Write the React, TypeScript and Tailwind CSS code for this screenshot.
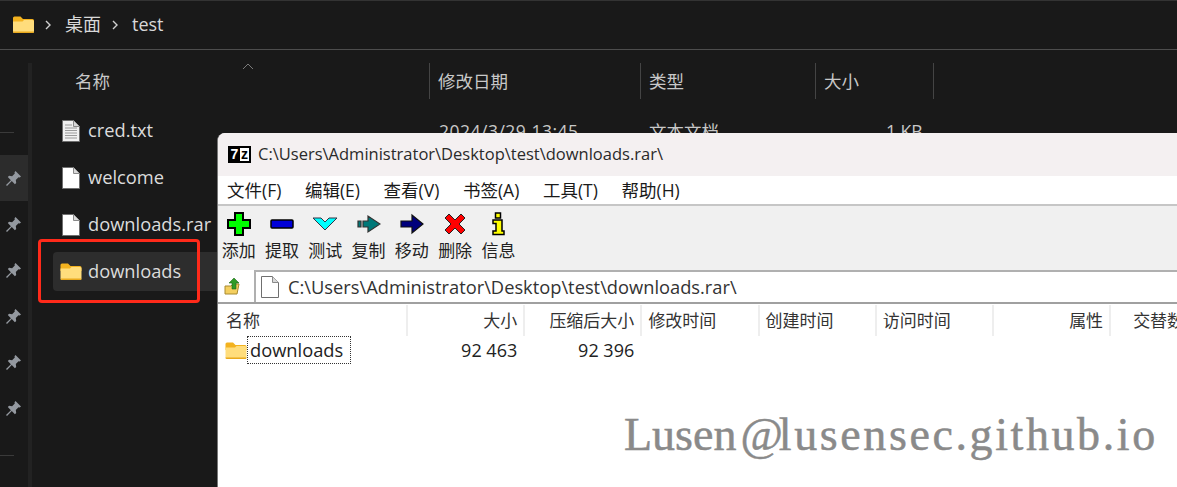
const CJK = "font-['Open_Sans','Noto_Sans_CJK_SC',sans-serif]";

function Folder({ w = 21, h = 17 }: { w?: number; h?: number }) {
  return (
    <svg width={w} height={h} viewBox="0 0 21 17" className="shrink-0">
      <path d="M0 2a1.500 1.500 0 0 1 1.500-1.500h6L10 3h9.500A1.500 1.500 0 0 1 21 4.500V8H0z" fill="#f3b21f" />
      <path d="M0 5.500h9.500L11 4h8.500A1.500 1.500 0 0 1 21 5.500v10a1.500 1.500 0 0 1-1.500 1.500h-18A1.500 1.500 0 0 1 0 15.500z" fill="#ffdd7c" />
      <path d="M0 15.500h21a1.500 1.500 0 0 1-1.500 1.500h-18A1.500 1.500 0 0 1 0 15.500z" fill="#e9a91d" />
    </svg>
  );
}

function Doc({ lines = false }: { lines?: boolean }) {
  return (
    <svg width="18" height="22" viewBox="0 0 18 22" className="shrink-0">
      <path d="M.5.500h11l6 6v15H.500z" fill={lines ? "#f1f1f1" : "#ffffff"} stroke="#6f6f6f" />
      <path d="M11.500.500v6h6" fill="#d9d9d9" stroke="#8a8a8a" />
      {lines && (
        <path d="M3 5h7M3 8h12M3 10.500h12M3 13h12M3 15.500h12M3 18h12" stroke="#9a9a9a" strokeWidth="1" />
      )}
    </svg>
  );
}

function Pin() {
  return (
    <svg width="17" height="17" viewBox="0 0 17 17">
      <path d="M10.500 1L16 6.500l-1.300 1-1.200-.3-2.700 2.700.4 3-1.300 1.300-3.100-3.100L2 16l-1-1 4.900-4.800L2.800 7.100 4.100 5.800l3 .4 2.700-2.700-.3-1.200z" fill="#9499a0" />
    </svg>
  );
}

function Chevron() {
  return (
    <svg width="8" height="12" viewBox="0 0 8 12" className="shrink-0">
      <path d="M2 2l4 4-4 4" fill="none" stroke="#d0d0d0" strokeWidth="1.400" />
    </svg>
  );
}

function FileRow({ icon, name, selected }: { icon: React.ReactNode; name: string; selected?: boolean }) {
  return (
    <div className={`flex h-[39px] items-center mb-2 ${selected ? "bg-[#2d2d2d] rounded-sm" : ""}`}>
      <div className="w-[35px] flex justify-center pr-[1px] pl-[1px]">{icon}</div>
      <span className="text-[18.300px] text-[#dcdcdc] -mt-[2px]">{name}</span>
    </div>
  );
}

const tools: [string, React.ReactNode][] = [
  ["添加", <path d="M8 1h8v7h7v8h-7v7H8v-7H1V8h7z" fill="#00ff00" stroke="#000" strokeWidth="2" />],
  ["提取", <path d="M2 8h20a1 1 0 0 1 1 1v6a1 1 0 0 1-1 1H2a1 1 0 0 1-1-1V9a1 1 0 0 1 1-1z" fill="#0000d8" stroke="#000" strokeWidth="1.500" />],
  ["测试", <path d="M0 6h8l4 4 4-4h8L12 18z" fill="#00ffff" stroke="#334" strokeWidth="1" />],
  ["复制", <path d="M1 9h3v6H1zM6 9h5V4l12 8-12 8v-5H6z" fill="#007878" stroke="#333" strokeWidth="1.200" />],
  ["移动", <path d="M1 9h11V3l11 9-11 9v-6H1z" fill="#00007c" stroke="#111" strokeWidth="1.200" />],
  ["删除", <path d="M6 2l6 6 6-6 4 4-6 6 6 6-4 4-6-6-6 6-4-4 6-6-6-6z" fill="#ff0000" stroke="#222" strokeWidth="1" />],
  ["信息", <path d="M9.500 1h5v5h-5zM7 8h9v11h2v3.500H7V19h3v-7.500H7z" fill="#ffff00" stroke="#000" strokeWidth="1.500" />],
];

const menus = ["文件(F)", "编辑(E)", "查看(V)", "书签(A)", "工具(T)", "帮助(H)"];

const headers: [string, string][] = [
  ["大小", "justify-end"],
  ["压缩后大小", "justify-end"],
  ["修改时间", "justify-start"],
  ["创建时间", "justify-start"],
  ["访问时间", "justify-start"],
  ["属性", "justify-end"],
];

export default function App() {
  return (
    <div className={`relative w-[1177px] h-[487px] overflow-hidden bg-[#191919] ${CJK}`}>
      {/* address bar */}
      <div className="h-[50px] flex items-center pl-[13px] border-y border-t-[#333] border-b-[#4d4d4d] text-[#d8d8d8] text-[18px]">
        <div className="-mt-[2px] flex"><Folder /></div>
        <div className="ml-[10px]"><Chevron /></div>
        <span className="ml-[13px] -mt-[1px]">桌面</span>
        <div className="ml-[10px]"><Chevron /></div>
        <span className="ml-[13px] -mt-[1px]">test</span>
      </div>

      <div className="flex h-[437px]">
        {/* navigation */}
        <div className="w-[28px] pt-[105px] flex flex-col items-stretch">
          <div className="h-px w-[14px] -mt-[23px] mb-[22px] bg-[#3a3a3a]" />
          {[0, 1, 2, 3, 4, 5].map((i) => (
            <div key={i} className={`h-[46.100px] flex items-center justify-center pr-[2px] ${i === 0 ? "bg-[#2c2c2c]" : ""}`}>
              <Pin />
            </div>
          ))}
          <div className="h-px w-[14px] mt-[23px] bg-[#3a3a3a]" />
        </div>
        <div className="w-[4px] bg-[#222] mt-[13px]" />

        {/* files */}
        <div className="flex-1 pl-[21px]">
          <div className="relative h-[61px] pt-[13px] text-[17.500px] text-[#c8c8c8]">
            <div className="flex h-[36px] items-center">
              <div className="w-[376px] pl-[22px]">名称</div>
              {[["修改日期", 211], ["类型", 175], ["大小", 118]].map(([t, w]) => (
                <div key={t as string} className="h-full flex items-center pl-[8px] border-l border-[#444]" style={{ width: w as number }}>
                  {t}
                </div>
              ))}
              <div className="h-full border-l border-[#444]" />
            </div>
            <svg width="12" height="7" viewBox="0 0 12 7" className="absolute left-[189px] top-[13px]">
              <path d="M1 6l5-5 5 5" fill="none" stroke="#7a7a7a" />
            </svg>
          </div>
          <div className="relative">
            <FileRow icon={<Doc lines />} name="cred.txt" />
            <FileRow icon={<Doc />} name="welcome" />
            <FileRow icon={<Doc />} name="downloads.rar" />
            <FileRow icon={<Folder w={22} h={17} />} name="downloads" selected />
            <div className="absolute top-[7px] left-[386px] text-[17.500px] tracking-[0.500px] text-[#c8c8c8]">2024/3/29 13:45</div>
            <div className="absolute top-[7px] left-[596px] text-[17.500px] text-[#c8c8c8]">文本文档</div>
            <div className="absolute top-[7px] left-[833px] text-[17.500px] text-[#c8c8c8]">1 KB</div>
          </div>
        </div>
      </div>

      {/* red annotation */}
      <div className="absolute left-[38px] top-[239px] w-[162px] h-[64px] border-[3px] border-[#ff2a1a] rounded-[4px]" />

      {/* 7-Zip window */}
      <div className="absolute left-[217px] top-[133px] w-[960px] h-[354px] bg-white rounded-tl-[8px] overflow-hidden border-l border-[#777] text-[#1a1a1a]">
        <div className="h-[43px] flex items-center bg-[#f4f0f1] pl-[10px] text-[16.500px] text-[#2a2a2a]">
          <div className="w-[23px] h-[17px] bg-black flex items-stretch p-[2px] gap-px font-['Liberation_Sans',sans-serif] text-[14px] leading-[13px] font-bold">
            <span className="flex-1 bg-black text-white text-center">7</span>
            <span className="flex-1 bg-white text-black text-center">z</span>
          </div>
          <span className="ml-[7px]">C:\Users\Administrator\Desktop\test\downloads.rar\</span>
        </div>
        <div className="h-[28px] flex items-center pl-[9px] gap-[23.600px] text-[17.500px] bg-white border-b-[2px] border-[#c6c6c6] box-content">
          {menus.map((m) => <span key={m}>{m}</span>)}
        </div>
        <div className="h-[64px] bg-[#f0f0f0] flex -ml-[1px]">
          {tools.map(([label, icon]) => (
            <div key={label} className="w-[43.300px] flex flex-col items-center pt-[6px]">
              <svg width="24" height="24" viewBox="0 0 24 24">{icon}</svg>
              <span className="text-[17px] leading-[22px] mt-[4px] text-[#222] whitespace-nowrap">{label}</span>
            </div>
          ))}
        </div>
        <div className="h-[34px] flex bg-white border-b-[2px] border-[#a0a0a0]">
          <div className="w-[36px] bg-white flex items-center justify-center pr-[7px]">
            <svg width="18" height="20" viewBox="0 0 18 20">
              <path d="M1 10h6l2-2h6l-2 10H1z" fill="#f4cf5f" stroke="#a88a30" />
              <path d="M10 2l5 5h-3v6H8V7H5z" fill="#2f9a27" stroke="#1c6a18" strokeWidth=".6" />
            </svg>
          </div>
          <div className="flex-1 flex items-center border-t-2 border-l-2 border-[#b0b0b0] pl-[5px]">
            <Doc />
            <span className="ml-[9px] text-[18.300px] text-[#333]">C:\Users\Administrator\Desktop\test\downloads.rar\</span>
          </div>
        </div>
        {/* list */}
        <div className="flex h-[32px] text-[17px] text-[#333] pt-[1px]">
          <div className="w-[190px] shrink-0 flex items-center pl-[8px] border-r-2 border-[#eee]">名称</div>
          {headers.map(([t, j]) => (
            <div key={t} className={`w-[117.200px] shrink-0 flex items-center px-[6px] border-r-2 border-[#eee] whitespace-nowrap ${j}`}>{t}</div>
          ))}
          <div className="shrink-0 flex items-center pl-[22px] whitespace-nowrap">交替数据流</div>
        </div>
        <div className="flex items-center h-[28px] text-[18px] text-[#222]">
          <div className="pl-[7px]"><Folder w={22} h={17} /></div>
          <span className="border border-dotted border-[#333] pl-[2px] pr-[7px] text-[18.300px] leading-[26px] h-[28px]">downloads</span>
          <span className="w-[166px] text-right">92 463</span>
          <span className="w-[117px] text-right">92 396</span>
        </div>
      </div>

      {/* watermark */}
      <div className="absolute left-[624px] top-[405px] flex text-[46px] leading-[60px] text-[#8a8a8a] font-['Liberation_Serif',serif] [-webkit-text-stroke:0.5px_#8a8a8a] whitespace-nowrap">
        <span>Lusen</span>
        <span className="ml-[4px] -mr-[4px]">@</span>
        <span className="tracking-[2.600px]">lusensec.github.io</span>
      </div>
    </div>
  );
}
